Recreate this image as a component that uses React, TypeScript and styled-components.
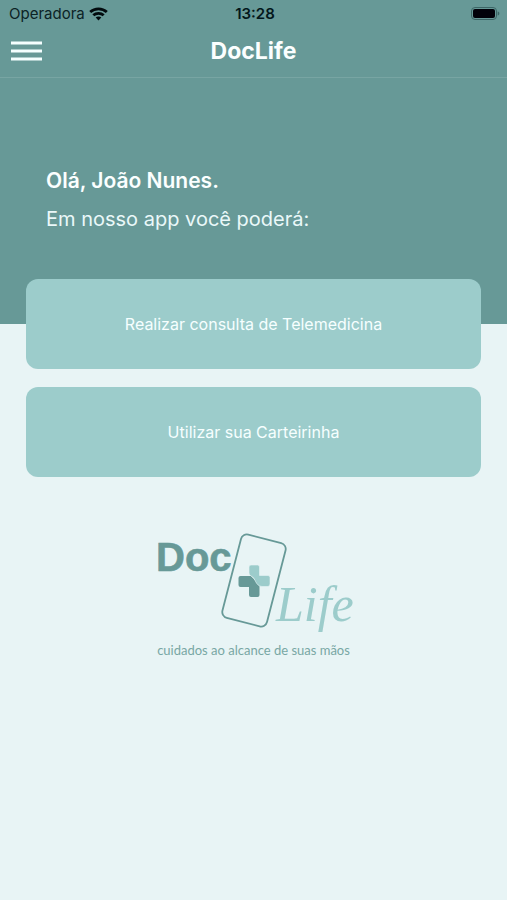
import React from "react";
import styled, { createGlobalStyle } from "styled-components";

const deep = "#679997";
const soft = "#9ccccb";
const pale = "#e8f4f5";

const GlobalStyle = createGlobalStyle`
  * { box-sizing: border-box; }
  body {
    margin: 0;
    background: ${pale};
    font-family: Inter, "Liberation Sans", sans-serif;
  }
`;

const Screen = styled.div`
  min-height: 100vh;
  display: flex;
  flex-direction: column;
`;

const StatusBar = styled.div`
  display: grid;
  grid-template-columns: 1fr auto 1fr;
  align-items: center;
  height: 28px;
  padding: 0 6px 0 9px;
  background: ${deep};
  color: #0c2326;
  font-size: 15px;
  line-height: 20px;
`;

const Carrier = styled.div`
  display: flex;
  align-items: center;
  gap: 4px;
`;

const Clock = styled.time`
  color: #03171b;
  font-weight: 600;
`;

const BatteryIcon = styled.svg`
  justify-self: end;
`;

const NavBar = styled.header`
  display: grid;
  grid-template-columns: 1fr auto 1fr;
  align-items: center;
  height: 50px;
  padding: 0 10px 4px;
  background: ${deep};
  border-bottom: 1px solid #78a5a3;
`;

const MenuButton = styled.button`
  display: flex;
  justify-self: start;
  padding: 0;
  border: 0;
  background: none;
  cursor: pointer;
`;

const Title = styled.h1`
  margin: 0;
  color: #fbffff;
  font-size: 23px;
  line-height: 28px;
  font-weight: 700;
`;

const Hero = styled.section`
  padding: 89px 46px 91px;
  background: ${deep};
`;

const Greeting = styled.h2`
  margin: 0 0 10px;
  color: #fbffff;
  font-size: 21px;
  line-height: 28px;
  font-weight: 600;
`;

const Intro = styled.p`
  margin: 0;
  color: #eaf8f9;
  font-size: 20px;
  line-height: 28px;
`;

const Actions = styled.main`
  position: relative;
  display: flex;
  flex-direction: column;
  gap: 18px;
  margin-top: -45px;
  padding: 0 26px;
`;

const ActionButton = styled.button`
  height: 90px;
  border: 0;
  border-radius: 12px;
  background: ${soft};
  color: #f6ffff;
  font-family: inherit;
  font-size: 16px;
  line-height: 24px;
  cursor: pointer;
`;

const Brand = styled.footer`
  display: flex;
  flex-direction: column;
  align-items: center;
  padding-top: 54px;
`;

const BrandMark = styled.svg`
  overflow: visible;
`;

const DocText = styled.text`
  fill: ${deep};
  stroke: ${deep};
  stroke-width: 0.6px;
  font-family: "Liberation Sans", sans-serif;
  font-size: 40px;
  font-weight: 700;
`;

const LifeText = styled.text`
  fill: ${soft};
  font-family: "Liberation Serif", serif;
  font-size: 50px;
  font-style: italic;
`;

const Tagline = styled.p`
  margin: 0;
  color: #78a7a4;
  font-family: Lato, sans-serif;
  font-size: 13px;
  line-height: 16px;
`;

export default function App() {
  return (
    <Screen>
      <GlobalStyle />
      <StatusBar>
        <Carrier>
          Operadora
          <svg width="19" height="14" viewBox="0 0 19 14" fill="none" stroke="#020b0e" strokeWidth="2.8" aria-label="Wi-Fi">
            <path d="M1.2 5.1C5.8.7 13.2.7 17.8 5.1M4.3 8.3c2.9-2.7 7.5-2.7 10.4 0" />
            <path d="M6.7 10.6c1.6-1.5 4-1.5 5.6 0L9.5 13.4Z" fill="#020b0e" stroke="none" />
          </svg>
        </Carrier>
        <Clock>13:28</Clock>
        <BatteryIcon width="30" height="14" viewBox="0 0 30 14" aria-label="Bateria">
          <rect x="0.5" y="0.5" width="25" height="12" rx="3.5" fill="none" stroke="#3c6666" />
          <rect x="2" y="2" width="22" height="9" rx="2" fill="#02020a" />
          <path d="M26.7 4.5c2.2.6 2.2 3.4 0 4Z" fill="#3c6666" />
        </BatteryIcon>
      </StatusBar>
      <NavBar>
        <MenuButton aria-label="Menu">
          <svg width="33" height="20" viewBox="0 0 33 20" fill="#f5ffff">
            <rect x="1" y="0.5" width="31" height="3" />
            <rect x="1" y="8.5" width="31" height="3" />
            <rect x="1" y="16.5" width="31" height="3" />
          </svg>
        </MenuButton>
        <Title>DocLife</Title>
      </NavBar>
      <Hero>
        <Greeting>Olá, João Nunes.</Greeting>
        <Intro>Em nosso app você poderá:</Intro>
      </Hero>
      <Actions>
        <ActionButton>Realizar consulta de Telemedicina</ActionButton>
        <ActionButton>Utilizar sua Carteirinha</ActionButton>
      </Actions>
      <Brand>
        <BrandMark width="194" height="111" viewBox="157 531 194 111" role="img" aria-label="Doc Life">
          <DocText x="156" y="571">Doc</DocText>
          <rect x="231" y="537.5" width="46" height="86" rx="6" transform="rotate(14.5 254 580.5)" fill="none" stroke={deep} strokeWidth="1.8" />
          <path
            d="M240.5 576H251L259.5 585V595Q259.5 597 257.5 597H251Q249 597 249 595V587H240.5Q238.5 587 238.5 585V578Q238.5 576 240.5 576Z"
            fill={deep}
          />
          <path
            d="M251 565H257.5Q259.5 565 259.5 567V575.5H268Q270 575.5 270 577.5V584Q270 586 268 586.5H262C255 586 256 578 251 576Q249 575 249 573V567Q249 565 251 565Z"
            fill={soft}
            stroke={pale}
            strokeWidth="0.6"
          />
          <LifeText x="276" y="621">Life</LifeText>
        </BrandMark>
        <Tagline>cuidados ao alcance de suas mãos</Tagline>
      </Brand>
    </Screen>
  );
}
